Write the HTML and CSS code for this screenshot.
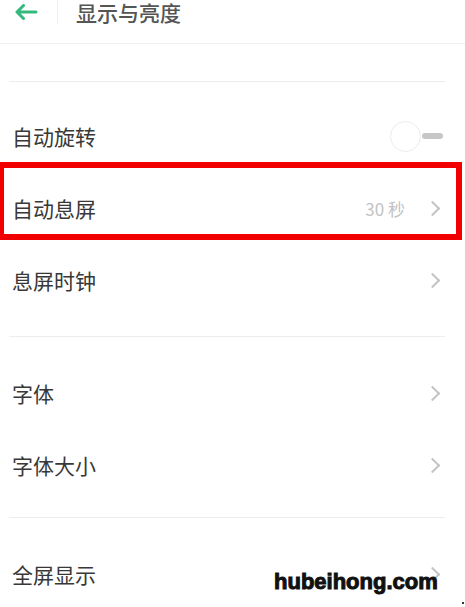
FILE: index.html
```html
<!DOCTYPE html>
<html lang="zh-CN">
<head>
  <meta charset="utf-8">
  <meta name="viewport" content="width=device-width, initial-scale=1.0">
  <title>显示与亮度</title>
  <link rel="stylesheet" href="styles.css">
</head>
<body>

  <header class="topbar">
    <span class="back">
      <svg width="24" height="16" viewBox="0 0 24 16">
        <path d="M22 8H3M9.5 1.5L3 8l6.5 6.5" fill="none" stroke="#34b97c" stroke-width="3" stroke-linecap="round" stroke-linejoin="round"/>
      </svg>
    </span>
    <span class="bar-sep"></span>
    <h1>显示与亮度</h1>
  </header>

  <div class="spacer"></div>

  <!-- Screen -->
  <section class="group group-first">
    <div class="row">
      <span class="label">自动旋转</span>
      <span class="switch"><span class="knob"></span><span class="track"></span></span>
    </div>
    <div class="row marked">
      <span class="label">自动息屏</span>
      <span class="value">30 秒</span>
      <span class="chev"></span>
      <span class="mark"></span>
    </div>
    <div class="row">
      <span class="label">息屏时钟</span>
      <span class="chev"></span>
    </div>
  </section>

  <!-- Fonts -->
  <section class="group">
    <div class="row">
      <span class="label">字体</span>
      <span class="chev"></span>
    </div>
    <div class="row">
      <span class="label">字体大小</span>
      <span class="chev"></span>
    </div>
  </section>

  <section class="group">
    <div class="row">
      <span class="label">全屏显示</span>
      <span class="chev"></span>
    </div>
  </section>

  <div class="watermark">hubeihong.com</div>
  <span class="dot"></span>

</body>
</html>
```

FILE: styles.css
```css
/* Display settings */
body {
  margin: 0;
  height: 607px;
  overflow: hidden;
  position: relative;
  background: #fff;
  font-family: "Noto Sans CJK SC", "Noto Sans", sans-serif;
  color: #333;
}

.topbar {
  height: 43px;
  display: flex;
  align-items: flex-start;
  border-bottom: 1px solid #f0f0f0;
}

.back {
  display: flex;
  align-items: center;
  height: 24px;
  margin-left: 14px;
}

.bar-sep {
  width: 1px;
  height: 24px;
  background: #eee;
  margin-left: 19px;
}

.topbar h1 {
  margin: 0 0 0 18px;
  font-size: 21px;
  line-height: 24px;
  font-weight: 500;
  color: #555;
}

.spacer {
  height: 37px;
}

.group {
  margin: 0 20px 0 9px;
  border-top: 1.5px solid #ededed;
  padding: 20px 0 16px;
}

.group-first {
  padding-top: 18px;
  padding-bottom: 20px;
}

.row {
  position: relative;
  height: 72px;
  display: flex;
  align-items: center;
  padding: 0 2px 0 3px;
}

.label {
  flex: 1;
  font-size: 21px;
  color: #383838;
}

.value {
  font-size: 17px;
  color: #c2c2c2;
  margin-right: 22px;
}

.chev {
  width: 9px;
  height: 9px;
  border-top: 2px solid #c4c4c4;
  border-right: 2px solid #c4c4c4;
  transform: rotate(45deg);
  margin-right: 5px;
}

.switch {
  display: flex;
  align-items: center;
}

.knob {
  width: 29px;
  height: 29px;
  border-radius: 50%;
  border: 1px solid #ececec;
  background: #fff;
}

.track {
  width: 21px;
  height: 6px;
  border-radius: 3px;
  background: #c6c6c6;
  margin-left: 1px;
}

/* annotation box around the row */
.mark {
  position: absolute;
  top: -10px;
  left: -9px;
  width: 452px;
  height: 66px;
  border: 6px solid #f20000;
  border-left-width: 4px;
}

.watermark {
  position: absolute;
  left: 274px;
  top: 569px;
  font-family: "Liberation Sans", Arial, sans-serif;
  font-weight: bold;
  font-size: 22px;
  line-height: 26px;
  color: #111;
  -webkit-text-stroke: 1px #111;
}

.dot {
  position: absolute;
  left: 462px;
  top: 602px;
  width: 2px;
  height: 2px;
  background: #333;
}
```
